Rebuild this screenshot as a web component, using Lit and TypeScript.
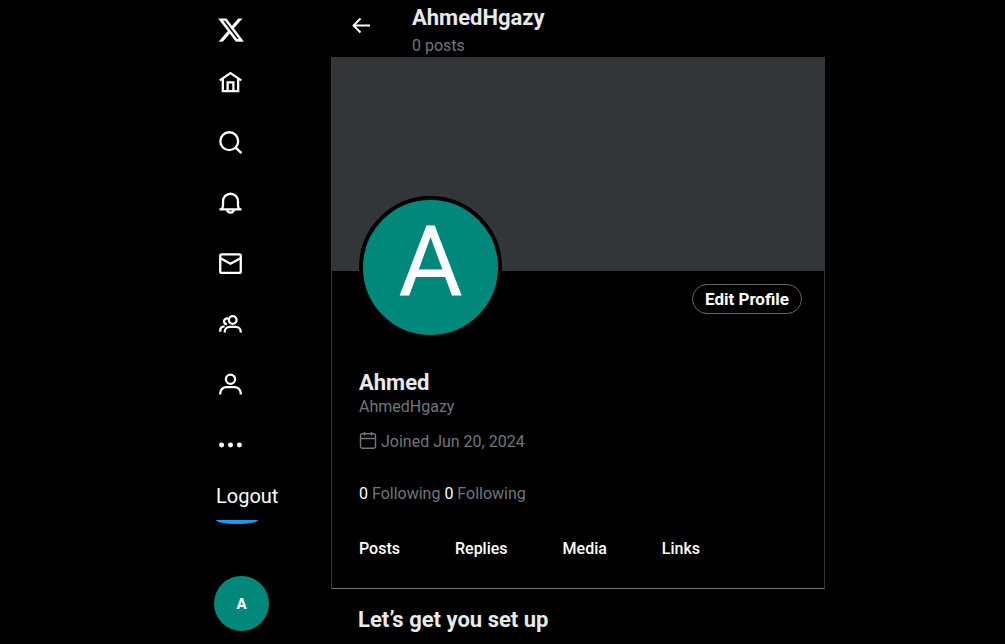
import { LitElement, html, css, svg } from "lit";
import { customElement } from "lit/decorators.js";

const navItems = [
  { label: "Home", art: svg`<path d="M.8 9.800 12 2.200l11.200 7.600M4 8v13h16V8M9 20.500V11.900h6v8.600"/>` },
  { label: "Explore", art: svg`<circle cx="10.700" cy="10.600" r="9.300"/><path d="m17.400 17.300 6 5.800"/>` },
  { label: "Notifications", art: svg`<path d="M.5 18.200h23M2.300 18c1.700-1 1.900-2.500 1.900-4V9.600a7.800 7.800 0 0 1 15.600 0V14c0 1.500.2 3 1.900 4M8.300 18.500a3.800 3.800 0 0 0 7.400 0"/>` },
  { label: "Messages", art: svg`<rect x="1.300" y="2.400" width="21.400" height="19.400" rx="1.500"/><path d="m2 6.700 10 5.500 10-5.500"/>` },
  { label: "Communities", art: svg`<circle cx="14.300" cy="8.300" r="4"/><path d="M6 21.500v-1c0-2.900 2.200-4.900 5.200-4.900h6.300c3 0 5.200 2 5.200 4.900v1M9.500 6.800c-4.800-1-6 5.500-1.300 6M1.300 20.500V19c0-2 1.600-3.700 4.500-3.900"/>` },
  { label: "Profile", art: svg`<circle cx="12" cy="6.500" r="4.800"/><path d="M1.300 22.400V21c0-3.600 3-6.200 6.500-6.200h8.400c3.500 0 6.500 2.600 6.500 6.200v1.400"/>` },
  { label: "More", art: svg`<g fill="currentColor" stroke="none"><circle cx="2.700" cy="12.500" r="2.600"/><circle cx="12" cy="12.500" r="2.600"/><circle cx="21.300" cy="12.500" r="2.600"/></g>` },
];

@customElement("app-root")
export class AppRoot extends LitElement {
  static styles = css`
    :host {
      display: block;
      min-height: 100vh;
      background: #000;
      color: #fff;
      font-family: Roboto, "Liberation Sans", sans-serif;
      font-size: 16px;
      line-height: 20px;
    }
    * { box-sizing: border-box; }
    h1, h2, p { margin: 0; }
    a { color: inherit; text-decoration: none; }
    button { font: inherit; color: inherit; background: none; border: 0; padding: 0; cursor: pointer; }
    svg { display: block; fill: none; stroke: currentColor; stroke-width: 2.4; }
    .page { display: grid; grid-template-columns: 331fr 494fr 180fr; min-height: 100vh; }
    .side { display: flex; flex-direction: column; align-items: flex-start; justify-self: end; width: 117px; padding-top: 16px; }
    .logo { margin: 0 3px 27px; }
    .logo svg { fill: currentColor; stroke: currentColor; stroke-width: 0.3; }
    .nav { display: flex; flex-direction: column; justify-content: space-between; height: 385px; margin-left: 5px; }
    .logout { margin: 28px 0 12px 2px; font-size: 20px; line-height: 24px; }
    .post { width: 42px; height: 4px; margin: 0 0 52px 2px; background: #1d9bf0; border-radius: 0 0 20px 20px / 0 0 4px 4px; }
    .account { width: 55px; height: 55px; border-radius: 50%; background: #00897b; font-size: 15px; font-weight: 800; }
    .top { display: flex; height: 57px; padding: 4px 0 0 21px; }
    .back { align-self: flex-start; margin: 12px 42px 0 0; }
    .back svg { stroke-width: 1.9; }
    .title { color: #e7e9ea; font-size: 22px; line-height: 28px; font-weight: 700; }
    .muted { color: #71767b; }
    .top .muted { line-height: 28px; }
    .banner { height: 214px; background: #333639; }
    .card { border: solid #333639; border-width: 0 1px 1px; border-bottom-color: #71767b; padding: 13px 22px 29px 27px; }
    .head { display: flex; justify-content: space-between; align-items: flex-start; margin-bottom: 30px; }
    .avatar { display: grid; place-items: center; width: 143px; height: 143px; margin-top: -88px; padding-bottom: 12px; border: 4px solid #000; border-radius: 50%; background: #00897b; font-size: 99px; line-height: 1; }
    .edit { width: 110px; height: 30px; border: 1px solid #666; border-radius: 15px; font-size: 17px; font-weight: 700; }
    .joined { display: flex; align-items: center; gap: 4px; margin: 15px 0 32px; }
    .joined svg { stroke-width: 1.4; }
    .count { color: #fff; }
    .tabs { display: flex; gap: 55px; margin-top: 35px; font-weight: 500; }
    .setup { padding: 17px 27px; }
  `;

  render() {
    return html`
      <div class="page">
        <header class="side">
          <a class="logo" href="#" aria-label="X"><svg width="28" height="28" viewBox="0 0 24 24"><path d="M18.244 2.250h3.308l-7.227 8.260 8.502 11.240H16.170l-5.214-6.817L4.990 21.750H1.680l7.730-8.835L1.254 2.250H8.080l4.713 6.231zm-1.161 17.520h1.833L7.084 4.126H5.117z"/></svg></a>
          <nav class="nav">
            ${navItems.map((item) => html`<a href="#" aria-label=${item.label}><svg width="23" height="23" viewBox="0 0 24 24">${item.art}</svg></a>`)}
          </nav>
          <button class="logout">Logout</button>
          <button class="post" aria-label="Post"></button>
          <button class="account">A</button>
        </header>
        <main>
          <div class="top">
            <button class="back" aria-label="Back"><svg width="18" height="18" viewBox="0 0 18 18"><path d="M18 9.500H1.500M8.500 2.500l-7 7 7 7"/></svg></button>
            <div>
              <h1 class="title">AhmedHgazy</h1>
              <p class="muted">0 posts</p>
            </div>
          </div>
          <div class="banner"></div>
          <section class="card">
            <div class="head">
              <div class="avatar">A</div>
              <button class="edit">Edit Profile</button>
            </div>
            <h2 class="title">Ahmed</h2>
            <p class="muted">AhmedHgazy</p>
            <p class="muted joined"><svg width="18" height="20" viewBox="0 0 18 20"><rect x="1.500" y="1.700" width="15" height="14.600" rx="2"/><path d="M1.500 6.500h15M5.500 0v3.500M12.500 0v3.500"/></svg>Joined Jun 20, 2024</p>
            <p class="muted"><a href="#"><span class="count">0</span> Following</a> <a href="#"><span class="count">0</span> Following</a></p>
            <nav class="tabs"><a href="#">Posts</a><a href="#">Replies</a><a href="#">Media</a><a href="#">Links</a></nav>
          </section>
          <section class="setup"><h2 class="title">Let’s get you set up</h2></section>
        </main>
      </div>
    `;
  }
}
